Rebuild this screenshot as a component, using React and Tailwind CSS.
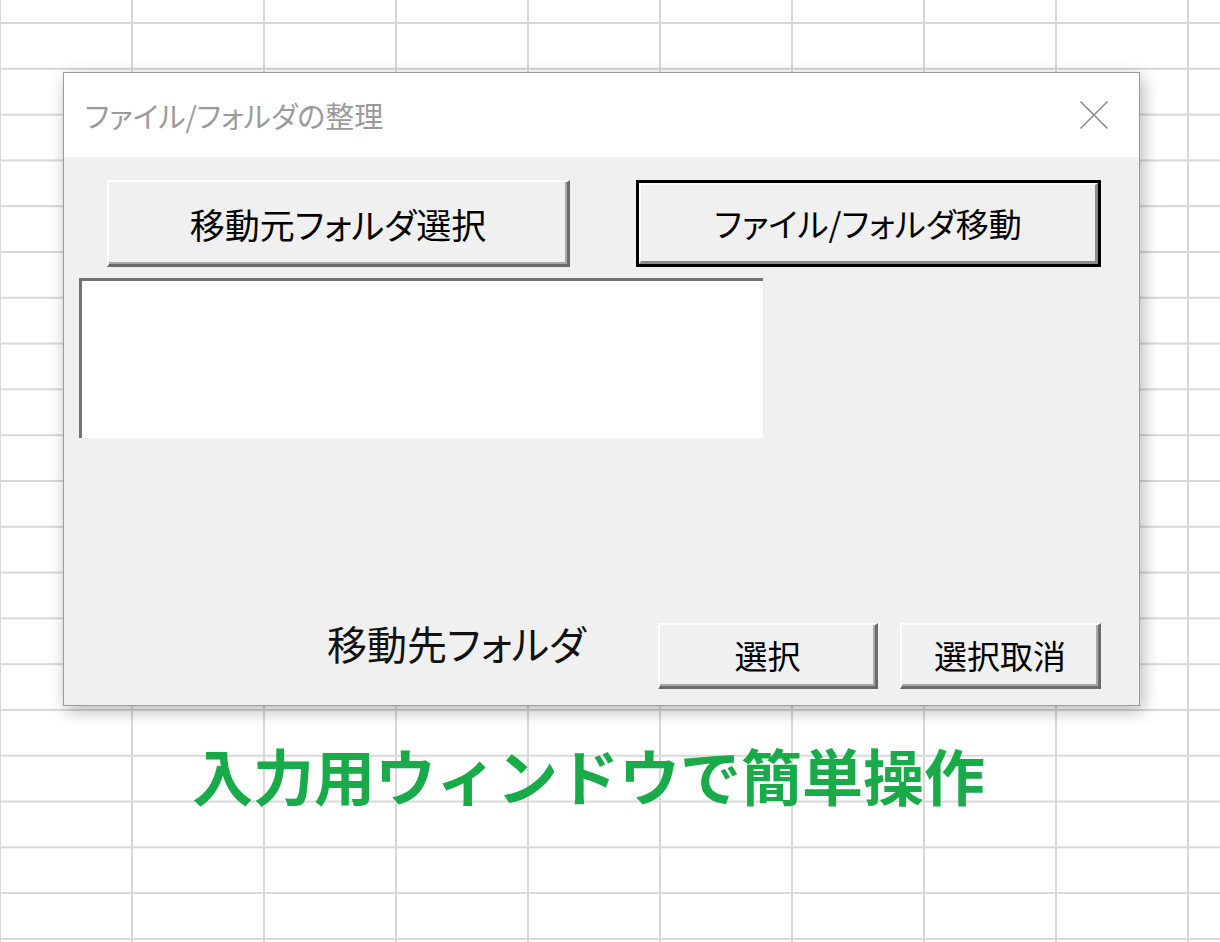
const jp = "font-['Noto_Sans_CJK_JP','Noto_Sans_CJK_SC',sans-serif]";

// classic raised Win32 push button
function PushButton({ children, className = '', isDefault = false }) {
  if (isDefault) {
    return (
      <div className={`border-[3px] border-black bg-[#f0f0f0] ${className}`}>
        <div className="flex h-full w-full items-center justify-center border-t-2 border-l-2 border-t-white border-l-white border-r-[3px] border-b-[3px] border-r-[#8a8a8a] border-b-[#8a8a8a] text-black">
          {children}
        </div>
      </div>
    );
  }
  return (
    <div
      className={`flex items-center justify-center border-t-2 border-l-2 border-t-white border-l-white border-r-[3px] border-b-[3px] border-r-[#6b6b6b] border-b-[#6b6b6b] bg-[#f0f0f0] text-black shadow-[inset_-2px_-2px_0_#a8a8a8] ${className}`}
    >
      {children}
    </div>
  );
}

function CloseIcon() {
  return (
    <svg width="30" height="30" viewBox="0 0 30 30" fill="none">
      <path d="M1.5 1.5 L28.5 28.5 M28.5 1.5 L1.5 28.5" stroke="#8c8c8c" strokeWidth="1.6" />
    </svg>
  );
}

export default function App() {
  return (
    <div
      className={`w-[1220px] h-[942px] overflow-hidden bg-white ${jp} [background-image:linear-gradient(to_right,#d8d8d8_2px,transparent_2px),linear-gradient(to_bottom,#d8d8d8_2px,transparent_2px)] [background-size:132px_45.8px] [background-position:131px_22px]`}
    >
      <div className="pt-[72px] pl-[63px]">
        {/* dialog window */}
        <div className="flex h-[634px] w-[1077px] flex-col border border-[#9a9a9a] bg-white shadow-[3px_5px_16px_rgba(0,0,0,0.28)]">
          <div className="flex h-[84px] shrink-0 items-center justify-between pl-[21px] pr-[30px]">
            <span className="text-[29px] leading-none text-[#9a9a9a] [font-feature-settings:'palt']">
              ファイル/フォルダの整理
            </span>
            <CloseIcon />
          </div>

          <div className="flex flex-1 flex-col bg-[#f0f0f0]">
            <div className="flex pt-[23px] pl-[43px]">
              <PushButton className="h-[87px] w-[463px] text-[35px] leading-none [font-feature-settings:'palt']">
                移動元フォルダ選択
              </PushButton>
              <PushButton isDefault className="ml-[66px] h-[87px] w-[465px] text-[33px] leading-none [font-feature-settings:'palt']">
                ファイル/フォルダ移動
              </PushButton>
            </div>

            {/* folder list */}
            <div className="ml-[15px] mt-[11px] h-[160px] w-[684px] border-t-[3px] border-l-[3px] border-[#747474] bg-white" />

            <div className="mt-[185px] flex items-start pr-[38px]">
              <span className="ml-[263px] text-[40px] leading-none text-[#111] [font-feature-settings:'palt']">
                移動先フォルダ
              </span>
              <div className="ml-auto flex gap-[22px]">
                <PushButton className="h-[66px] w-[220px] text-[33px] leading-none">選択</PushButton>
                <PushButton className="h-[66px] w-[201px] text-[33px] leading-none">選択取消</PushButton>
              </div>
            </div>
          </div>
        </div>
      </div>

      <div className="ml-[192px] mt-[38px] text-[61px] font-bold leading-none text-[#19aa4a]">
        入力用ウィンドウで簡単操作
      </div>
    </div>
  );
}
